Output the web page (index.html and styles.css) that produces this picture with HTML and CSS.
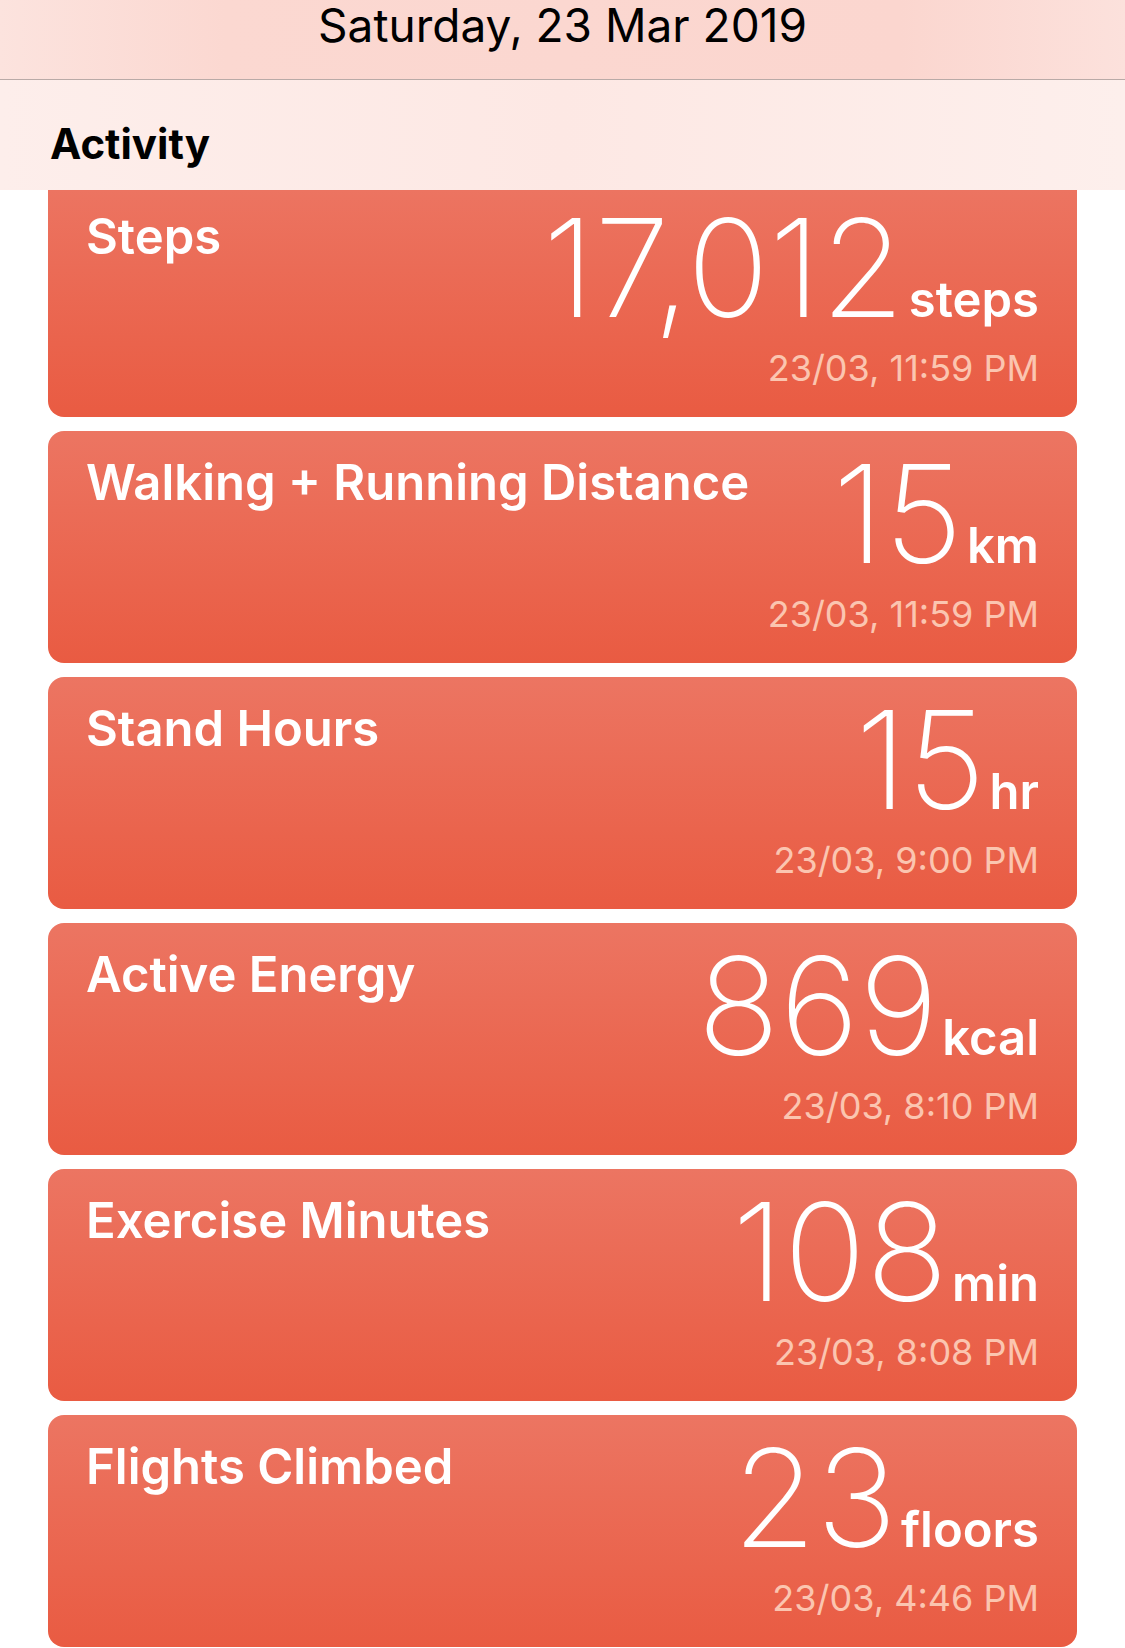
FILE: index.html
```html
<!DOCTYPE html>
<html lang="en">
<head>
    <meta charset="UTF-8">
    <meta name="viewport" content="width=device-width, initial-scale=1.0">
    <title>Activity</title>
    <link rel="stylesheet" href="styles.css">
</head>
<body>
    <header class="top-bar">
        <div class="day">Saturday, 23 Mar 2019</div>
    </header>
    <div class="section-head">
        <h1>Activity</h1>
    </div>

    <!-- Activity cards -->
    <div class="card-list">
        <div class="card first">
            <div class="card-row">
                <div class="card-title">Steps</div>
                <div class="value"><span class="num">17,012</span><span class="unit">steps</span></div>
            </div>
            <div class="stamp">23/03, 11:59 PM</div>
        </div>

        <div class="card">
            <div class="card-row">
                <div class="card-title">Walking + Running Distance</div>
                <div class="value"><span class="num">15</span><span class="unit">km</span></div>
            </div>
            <div class="stamp">23/03, 11:59 PM</div>
        </div>

        <div class="card">
            <div class="card-row">
                <div class="card-title">Stand Hours</div>
                <div class="value"><span class="num">15</span><span class="unit">hr</span></div>
            </div>
            <div class="stamp">23/03, 9:00 PM</div>
        </div>

        <div class="card">
            <div class="card-row">
                <div class="card-title">Active Energy</div>
                <div class="value"><span class="num">869</span><span class="unit">kcal</span></div>
            </div>
            <div class="stamp">23/03, 8:10 PM</div>
        </div>

        <div class="card">
            <div class="card-row">
                <div class="card-title">Exercise Minutes</div>
                <div class="value"><span class="num">108</span><span class="unit">min</span></div>
            </div>
            <div class="stamp">23/03, 8:08 PM</div>
        </div>

        <div class="card">
            <div class="card-row">
                <div class="card-title">Flights Climbed</div>
                <div class="value"><span class="num">23</span><span class="unit">floors</span></div>
            </div>
            <div class="stamp">23/03, 4:46 PM</div>
        </div>
    </div>
</body>
</html>
```

FILE: styles.css
```css
body {
    font-family: Inter, "Liberation Sans", sans-serif;
    margin: 0;
    padding: 0;
    background-color: #ffffff;
    height: 1648px;
    overflow: hidden;
}

.top-bar {
    height: 79px;
    background: linear-gradient(90deg, #fce3de 0%, #fbd8d1 20%, #fbd6cf 80%, #fce1dc 100%);
    border-bottom: 1px solid #b9aaa7;
}

.day {
    text-align: center;
    font-size: 46px;
    line-height: 50px;
    color: #000;
}

.section-head {
    height: 110px;
    background: linear-gradient(90deg, #fdeeeb 0%, #fde8e4 50%, #fdefec 100%);
}

.section-head h1 {
    margin: 0;
    padding: 39px 0 0 50px;
    font-size: 42px;
    line-height: 50px;
    font-weight: 700;
    color: #000;
}

.card-list {
    display: flex;
    flex-direction: column;
    gap: 14px;
    padding: 0 48px;
}

.card {
    height: 232px;
    box-sizing: border-box;
    padding: 17px 38px 0 38px;
    border-radius: 16px;
    background: linear-gradient(180deg, #ec7562 0%, #e95b42 100%);
    color: #fff;
}

.card.first {
    height: 227px;
    padding-top: 12px;
    border-top-left-radius: 0;
    border-top-right-radius: 0;
    background: linear-gradient(180deg, #ec7461 0%, #e95b42 100%);
}

.card-row {
    display: flex;
    justify-content: space-between;
    align-items: flex-start;
}

.card-title {
    padding-top: 5px;
    font-size: 49px;
    line-height: 60px;
    font-weight: 600;
    white-space: nowrap;
}

.value {
    display: flex;
    align-items: baseline;
    gap: 4px;
}

.num {
    font-size: 136px;
    line-height: 132px;
    font-weight: 200;
}

.unit {
    font-size: 49px;
    font-weight: 600;
}

.stamp {
    margin-top: 14px;
    text-align: right;
    font-size: 36px;
    line-height: 40px;
    color: #fbc5b0;
}
```
